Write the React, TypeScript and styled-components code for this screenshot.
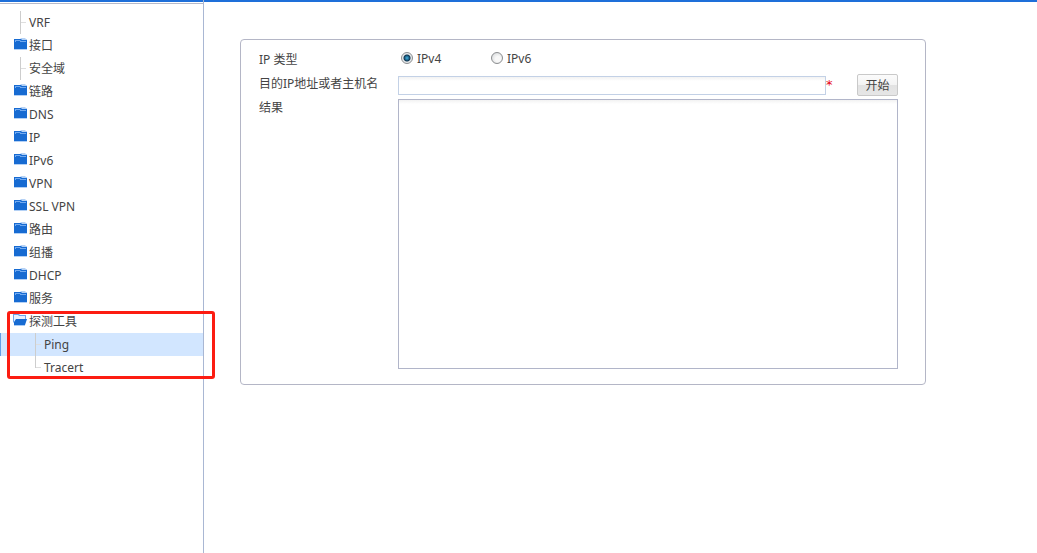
import React, { useState } from 'react';
import styled, { createGlobalStyle } from 'styled-components';

const GlobalStyle = createGlobalStyle`
  * { box-sizing: border-box; }
  body {
    margin: 0;
    background: #fff;
    color: #444;
    font: 12px/16px "Noto Sans", "Noto Sans CJK SC", sans-serif;
  }
`;

const Page = styled.div`
  display: flex;
  min-height: 100vh;
  background: linear-gradient(#1e6fd9, #1e6fd9) top / 100% 2px no-repeat;
`;

const Sidebar = styled.nav`
  flex: 0 0 204px;
  padding-top: 3px;
  border-right: 1px solid #a9b7d3;
`;

const Tree = styled.ul`
  margin: 0;
  padding: 7px 0 0;
  border-top: 1px solid #b5b9c9;
  list-style: none;
`;

const Branch = styled.li`
  position: relative;
`;

const SubTree = styled.ul`
  margin: 0;
  padding: 0;
  list-style: none;
`;

const NodeLink = styled.a<{ $indent: number; $selected?: boolean }>`
  display: flex;
  align-items: center;
  height: 23px;
  padding-left: ${({ $indent }) => $indent}px;
  background: ${({ $selected }) => ($selected ? '#d2e6ff' : 'transparent')};
  box-shadow: ${({ $selected }) => ($selected ? 'inset 1px 0 #619fe8' : 'none')};
  color: inherit;
  text-decoration: none;
  white-space: nowrap;
`;

const NodeIcon = styled.svg`
  flex: none;
  width: 16px;
  height: 13px;
  margin-bottom: 2px;
`;

const Connector = styled.span<{ $last?: boolean }>`
  align-self: stretch;
  width: 9px;
  background:
    linear-gradient(#cdcdcd, #cdcdcd) 0 0 / 1px ${({ $last }) => ($last ? '12px' : '100%')} no-repeat,
    linear-gradient(#dedede, #dedede) 0 11px / 6px 1px no-repeat;
`;

const Highlight = styled.span`
  position: absolute;
  inset: 1px -12px 0 7px;
  border: 3px solid #fc1c11;
  border-radius: 3px;
  pointer-events: none;
`;

const Main = styled.main`
  flex: 1;
  min-width: 0;
  padding: 39px 36px;
`;

const Panel = styled.form`
  display: grid;
  grid-template-columns: 139px 1fr;
  row-gap: 3px;
  max-width: 686px;
  padding: 7px 27px 15px 18px;
  border: 1px solid #b4b6c6;
  border-radius: 4px;
`;

const Caption = styled.label`
  padding-top: 1px;
`;

const TypeCaption = styled.span`
  padding-top: 5px;
`;

const AddressCaption = styled(Caption)`
  padding-top: 2px;
`;

const RadioRow = styled.div`
  display: flex;
  align-items: center;
  height: 24px;
  padding-left: 3px;
`;

const Option = styled.label`
  display: flex;
  align-items: center;
  gap: 4px;
  width: 90px;
  height: 24px;
`;

const Radio = styled.input`
  appearance: none;
  width: 12px;
  height: 12px;
  margin: 0 0 2px;
  border: 1px solid #8b8d8f;
  border-radius: 50%;
  background: radial-gradient(circle at 60% 60%, #f8f8f8 30%, #cfd2d4);

  &:checked {
    background: radial-gradient(circle at center, #45b4de 0, #1c648c 2px, #10354f 3px, #e6e9eb 4px);
  }
`;

const AddressRow = styled.div`
  display: flex;
  align-items: center;
  height: 22px;
`;

const AddressInput = styled.input`
  flex: 1;
  min-width: 0;
  height: 19px;
  padding: 0 4px;
  border: 1px solid #c3d1e6;
  background: linear-gradient(#f2f2f2, #fff 4px);
  font: inherit;
`;

const Required = styled.span`
  width: 31px;
  color: #e60012;
  font-family: "DejaVu Sans", sans-serif;
  font-size: 13px;
`;

const StartButton = styled.button`
  width: 41px;
  height: 22px;
  padding: 2px 0 0;
  border: 1px solid #c9c9c9;
  border-radius: 2px;
  background: linear-gradient(#fbfbfb, #f3f3f3 50%, #e2e2e2 50%, #e6e6e6);
  color: #444;
  font: inherit;
`;

const Result = styled.textarea`
  display: block;
  width: 100%;
  height: 270px;
  padding: 4px;
  border: 1px solid #b1b5c9;
  background: linear-gradient(#f2f2f2, #fff 4px);
  font: inherit;
  resize: none;
`;

function FolderIcon() {
  return (
    <NodeIcon viewBox="0 0 16 13" aria-hidden="true">
      <path d="M1 1h6l1-1h4l1 1h1v11H1z" fill="#b4d1f5" />
      <path d="M1 1h7l1 1h5v9H1z" fill="#176bd2" />
      <path d="M2 2h5l1 1h5v1H7V3H3v1H2z" fill="#72aaf0" />
    </NodeIcon>
  );
}

function OpenFolderIcon() {
  return (
    <NodeIcon viewBox="0 0 16 13" aria-hidden="true">
      <path d="M1 1h4l1 1h7v3H3L1 9z" fill="#e6f1ff" />
      <path d="M0 0h6l1 1h6v4h-1V2H6L5 1H1v7l-1 1z" fill="#6da5eb" />
      <path d="M3 5h11l-2 6H1V8z" fill="#176bd2" />
      <path d="M1 11h11v1H1z" fill="#a8cbf5" />
    </NodeIcon>
  );
}

interface TreeItem {
  name: string;
  leaf?: boolean;
}

const items: TreeItem[] = [
  { name: 'VRF', leaf: true },
  { name: '接口' },
  { name: '安全域', leaf: true },
  { name: '链路' },
  { name: 'DNS' },
  { name: 'IP' },
  { name: 'IPv6' },
  { name: 'VPN' },
  { name: 'SSL VPN' },
  { name: '路由' },
  { name: '组播' },
  { name: 'DHCP' },
  { name: '服务' },
];

const tools = ['Ping', 'Tracert'];

export default function App() {
  const [version, setVersion] = useState('IPv4');

  return (
    <>
      <GlobalStyle />
      <Page>
        <Sidebar>
          <Tree>
            {items.map(({ name, leaf }) => (
              <Branch key={name}>
                <NodeLink href="#" $indent={leaf ? 20 : 13}>
                  {leaf ? <Connector /> : <FolderIcon />}
                  {name}
                </NodeLink>
              </Branch>
            ))}
            <Branch>
              <NodeLink href="#" $indent={13}>
                <OpenFolderIcon />
                探测工具
              </NodeLink>
              <SubTree>
                {tools.map((tool, index) => (
                  <li key={tool}>
                    <NodeLink href="#" $indent={35} $selected={index === 0}>
                      <Connector $last={index === tools.length - 1} />
                      {tool}
                    </NodeLink>
                  </li>
                ))}
              </SubTree>
              <Highlight />
            </Branch>
          </Tree>
        </Sidebar>
        <Main>
          <Panel onSubmit={(event) => event.preventDefault()}>
            <TypeCaption id="ip-type">IP 类型</TypeCaption>
            <RadioRow role="radiogroup" aria-labelledby="ip-type">
              {['IPv4', 'IPv6'].map((option) => (
                <Option key={option}>
                  <Radio
                    type="radio"
                    name="version"
                    checked={version === option}
                    onChange={() => setVersion(option)}
                  />
                  {option}
                </Option>
              ))}
            </RadioRow>
            <AddressCaption htmlFor="address">目的IP地址或者主机名</AddressCaption>
            <AddressRow>
              <AddressInput id="address" type="text" required />
              <Required>*</Required>
              <StartButton type="submit">开始</StartButton>
            </AddressRow>
            <Caption htmlFor="result">结果</Caption>
            <Result id="result" readOnly />
          </Panel>
        </Main>
      </Page>
    </>
  );
}
